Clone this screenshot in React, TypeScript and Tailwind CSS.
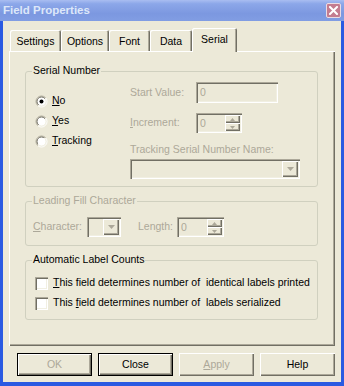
import type { ReactNode } from 'react'

// classic 3D edges (XP classic colours)
const raised = 'shadow-[inset_1px_1px_0_0_#ffffff,inset_-1px_-1px_0_0_#716f64,inset_-2px_-2px_0_0_#aca899]'
const sunken = 'shadow-[inset_1px_1px_0_0_#aca899,inset_2px_2px_0_0_#716f64,inset_-1px_-1px_0_0_#ffffff,inset_-2px_-2px_0_0_#f1efe2]'
const tabEdge = 'shadow-[inset_1px_1px_0_0_#ffffff,inset_-1px_0_0_0_#716f64,inset_-2px_0_0_0_#aca899]'

function Radio({ checked }: { checked?: boolean }) {
  return (
    <svg width="13" height="13" viewBox="0 0 13 13" className="shrink-0">
      <defs>
        <linearGradient id="rOut" x1="0" y1="0" x2="1" y2="1">
          <stop offset="0.5" stopColor="#aca899" />
          <stop offset="0.5" stopColor="#ffffff" />
        </linearGradient>
        <linearGradient id="rIn" x1="0" y1="0" x2="1" y2="1">
          <stop offset="0.5" stopColor="#716f64" />
          <stop offset="0.5" stopColor="#f1efe2" />
        </linearGradient>
      </defs>
      <circle cx="6.5" cy="6.5" r="5.5" fill="none" stroke="url(#rOut)" strokeWidth="1" />
      <circle cx="6.5" cy="6.5" r="4.5" fill="#ffffff" stroke="url(#rIn)" strokeWidth="1" />
      {checked && <circle cx="6.5" cy="6.5" r="2" fill="#000000" />}
    </svg>
  )
}

function Arrow({ dir = 'down', color = '#aca899' }: { dir?: 'up' | 'down'; color?: string }) {
  return (
    <svg width="7" height="4" viewBox="0 0 7 4">
      {dir === 'down' ? (
        <path d="M0 0h7L3.5 4z" fill={color} />
      ) : (
        <path d="M0 4h7L3.5 0z" fill={color} />
      )}
    </svg>
  )
}

function Spin({ w }: { w: string }) {
  return (
    <div className={`flex h-[20px] ${w} bg-[#ece9d8] p-[2px] ${sunken}`}>
      <div className="flex-1 pl-[2px] leading-[16px] text-[#aca899]">0</div>
      <div className="flex w-[15px] flex-col">
        <div className={`flex flex-1 items-center justify-center bg-[#ece9d8] ${raised}`}>
          <svg width="5" height="3" viewBox="0 0 5 3"><path d="M0 3h5L2.5 0z" fill="#aca899" /></svg>
        </div>
        <div className={`flex flex-1 items-center justify-center bg-[#ece9d8] ${raised}`}>
          <svg width="5" height="3" viewBox="0 0 5 3"><path d="M0 0h5L2.5 3z" fill="#aca899" /></svg>
        </div>
      </div>
    </div>
  )
}

function Combo({ w }: { w: string }) {
  return (
    <div className={`flex h-[20px] ${w} justify-end bg-[#ece9d8] p-[2px] ${sunken}`}>
      <div className={`flex w-[16px] items-center justify-center bg-[#ece9d8] ${raised}`}>
        <Arrow />
      </div>
    </div>
  )
}

function Group({ label, disabled, h, children }: { label: string; disabled?: boolean; h: string; children: ReactNode }) {
  return (
    <div className={`relative ${h} w-[293px] rounded-[3px] border border-[#d0d0bf]`}>
      <span
        className={`absolute left-[6px] top-[-8px] bg-[#ece9d8] px-[1px] leading-[13px] ${disabled ? 'text-[#aca899]' : 'text-black'}`}
      >
        {label}
      </span>
      {children}
    </div>
  )
}

function Button({ children, isDefault, disabled }: { children: ReactNode; isDefault?: boolean; disabled?: boolean }) {
  return (
    <div className={`h-[23px] w-[75px] ${isDefault ? 'border border-black' : ''}`}>
      <div
        className={`flex h-full w-full items-center justify-center ${raised} ${disabled ? 'text-[#aca899]' : 'text-black'}`}
      >
        {children}
      </div>
    </div>
  )
}

export default function App() {
  const tabs = [
    { name: 'Settings', w: 'w-[51px]' },
    { name: 'Options', w: 'w-[48px]' },
    { name: 'Font', w: 'w-[41px]' },
    { name: 'Data', w: 'w-[42px]' },
  ]

  return (
    <div className="flex h-[386px] w-[344px] flex-col bg-[#2a5ae2] font-['Liberation_Sans',Arial,sans-serif] text-[10.5px]">
      {/* title bar */}
      <div className="flex h-[21px] shrink-0 items-center bg-[linear-gradient(to_bottom,#a9bdf1_0%,#8ca7e9_18%,#7c98e0_65%,#819de3_100%)] pl-[3px]">
        <span className="flex-1 text-[11.5px] font-bold text-[#dde7f9]">Field Properties</span>
        <div className="mr-[3px] flex h-[15px] w-[15px] items-center justify-center rounded-[2px] border border-[#eadbe3] bg-[#c47c90]">
          <svg width="9" height="9" viewBox="0 0 9 9">
            <path d="M1 1l7 7M8 1L1 8" stroke="#ffffff" strokeWidth="2" strokeLinecap="square" />
          </svg>
        </div>
      </div>

      {/* client area */}
      <div className="mx-[3px] mb-[4px] flex flex-1 flex-col bg-[#ece9d8] text-black">
        {/* tabs */}
        <div className="mt-[7px] flex h-[23px] items-end pl-[7px]">
          {tabs.map((t) => (
            <div
              key={t.name}
              className={`flex h-[21px] ${t.w} items-center justify-center rounded-t-[2px] pt-[2px] ${tabEdge}`}
            >
              {t.name}
            </div>
          ))}
          <div
            className={`relative z-10 -mb-px flex h-[24px] w-[45px] items-center justify-center rounded-t-[2px] bg-[#ece9d8] ${tabEdge}`}
          >
            Serial
          </div>
        </div>

        {/* tab page */}
        <div className={`ml-[6px] flex h-[295px] w-[326px] flex-col pl-[16px] pt-[20px] ${raised}`}>
          <Group label="Serial Number" h="h-[116px]">
            <div className="flex">
              <div className="flex w-[104px] flex-col pl-[9px] pt-[19px]">
                <div className="flex h-[20px] items-center gap-[4px]">
                  <Radio checked />
                  <span><u>N</u>o</span>
                </div>
                <div className="flex h-[20px] items-center gap-[4px]">
                  <Radio />
                  <span><u>Y</u>es</span>
                </div>
                <div className="flex h-[20px] items-center gap-[4px]">
                  <Radio />
                  <span><u>T</u>racking</span>
                </div>
              </div>
              <div className="flex flex-col pt-[10px] text-[#aca899]">
                <div className="flex h-[21px] items-center">
                  <span className="w-[66px]">Start Value:</span>
                  <div className={`h-[21px] w-[82px] pl-[4px] pt-[2px] leading-[16px] ${sunken}`}>0</div>
                </div>
                <div className="mt-[10px] flex h-[20px] items-center">
                  <span className="w-[66px]"><u>I</u>ncrement:</span>
                  <Spin w="w-[46px]" />
                </div>
                <div className="mt-[10px] h-[13px] leading-[13px]">Tracking Serial Number Name:</div>
                <div className="mt-[3px]">
                  <Combo w="w-[170px]" />
                </div>
              </div>
            </div>
          </Group>

          <div className="mt-[14px]">
            <Group label="Leading Fill Character" disabled h="h-[45px]">
              <div className="mt-[15px] flex h-[20px] items-center pl-[7px] text-[#aca899]">
                <span className="w-[54px]"><u>C</u>haracter:</span>
                <Combo w="w-[34px]" />
                <span className="ml-[17px] w-[39px]">Length:</span>
                <Spin w="w-[47px]" />
              </div>
            </Group>
          </div>

          <div className="mt-[14px]">
            <Group label="Automatic Label Counts" h="h-[60px]">
              <div className="flex flex-col pl-[9px] pt-[12px]">
                <div className="flex h-[20px] items-center gap-[5px]">
                  <div className={`h-[13px] w-[13px] shrink-0 bg-white ${sunken}`} />
                  <span><u>T</u>his field determines number of&nbsp; identical labels printed</span>
                </div>
                <div className="flex h-[20px] items-center gap-[5px]">
                  <div className={`h-[13px] w-[13px] shrink-0 bg-white ${sunken}`} />
                  <span>This <u>f</u>ield determines number of&nbsp; labels serialized</span>
                </div>
              </div>
            </Group>
          </div>
        </div>

        {/* buttons */}
        <div className="mt-[7px] flex gap-[6px] pl-[14px]">
          <Button isDefault disabled>OK</Button>
          <Button isDefault>Close</Button>
          <Button disabled><u>A</u>pply</Button>
          <Button>Help</Button>
        </div>
      </div>
    </div>
  )
}
